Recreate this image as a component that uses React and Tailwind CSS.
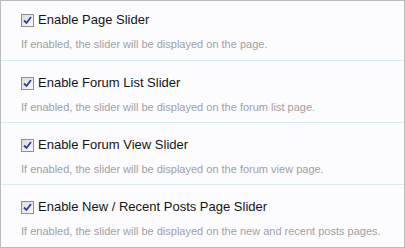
const options = [
  {
    label: "Enable Page Slider",
    hint: "If enabled, the slider will be displayed on the page.",
  },
  {
    label: "Enable Forum List Slider",
    hint: "If enabled, the slider will be displayed on the forum list page.",
  },
  {
    label: "Enable Forum View Slider",
    hint: "If enabled, the slider will be displayed on the forum view page.",
  },
  {
    label: "Enable New / Recent Posts Page Slider",
    hint: "If enabled, the slider will be displayed on the new and recent posts pages.",
  },
];

function CheckBox() {
  return (
    <span className="w-[13px] h-[13px] shrink-0 border border-[#8e8f8f] bg-gradient-to-br from-[#dcdcdc] to-[#fbfbfb] flex items-center justify-center">
      <svg width="9" height="9" viewBox="0 0 9 9">
        <path
          d="M1 4.5 L3.5 7 L8 1"
          fill="none"
          stroke="#2a3fa0"
          strokeWidth="1.8"
        />
      </svg>
    </span>
  );
}

// row heights follow the reference: first row is a bit shorter
const rowClass = [
  "h-[60px] pt-[11px] border-b border-[#d7ebf2]",
  "h-[62px] pt-[14px] border-b border-[#d7ebf2]",
  "h-[62px] pt-[14px] border-b border-[#d7ebf2]",
  "flex-1 pt-[14px]",
];

export default function App() {
  return (
    <div
      className="w-[405px] h-[248px] border border-[#bcbcbc] bg-[#fcfcff] flex flex-col"
      style={{ fontFamily: "'Liberation Sans', Arial, sans-serif" }}
    >
      {options.map((opt, i) => (
        <div key={i} className={`pl-[20px] flex flex-col ${rowClass[i]}`}>
          <label className="flex items-center gap-[4px] h-[16px] text-[13px] text-[#141414]">
            <CheckBox />
            <span>{opt.label}</span>
          </label>
          <p className="mt-[9px] text-[11px] leading-[14px] text-[#a0a0a0]">
            {opt.hint}
          </p>
        </div>
      ))}
    </div>
  );
}
